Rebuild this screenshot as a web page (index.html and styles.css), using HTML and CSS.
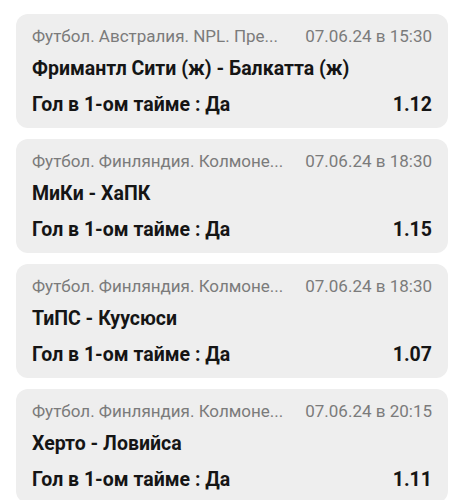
FILE: index.html
```html
<!DOCTYPE html>
<html lang="ru">
<head>
    <meta charset="utf-8" />
    <title>Ставки</title>
    <link rel="stylesheet" href="styles.css">
</head>
<body>
    <ul class="bets">
        <li class="bet">
            <div class="bet-head">
                <span class="bet-league">Футбол. Австралия. NPL. Пре...</span>
                <span class="bet-date">07.06.24 в 15:30</span>
            </div>
            <div class="bet-match">Фримантл Сити (ж) - Балкатта (ж)</div>
            <div class="bet-row">
                <span class="bet-outcome">Гол в 1-ом тайме : Да</span>
                <span class="bet-odds">1.12</span>
            </div>
        </li>
        <li class="bet">
            <div class="bet-head">
                <span class="bet-league">Футбол. Финляндия. Колмоне...</span>
                <span class="bet-date">07.06.24 в 18:30</span>
            </div>
            <div class="bet-match">МиКи - ХаПК</div>
            <div class="bet-row">
                <span class="bet-outcome">Гол в 1-ом тайме : Да</span>
                <span class="bet-odds">1.15</span>
            </div>
        </li>
        <li class="bet">
            <div class="bet-head">
                <span class="bet-league">Футбол. Финляндия. Колмоне...</span>
                <span class="bet-date">07.06.24 в 18:30</span>
            </div>
            <div class="bet-match">ТиПС - Куусюси</div>
            <div class="bet-row">
                <span class="bet-outcome">Гол в 1-ом тайме : Да</span>
                <span class="bet-odds">1.07</span>
            </div>
        </li>
        <li class="bet">
            <div class="bet-head">
                <span class="bet-league">Футбол. Финляндия. Колмоне...</span>
                <span class="bet-date">07.06.24 в 20:15</span>
            </div>
            <div class="bet-match">Херто - Ловийса</div>
            <div class="bet-row">
                <span class="bet-outcome">Гол в 1-ом тайме : Да</span>
                <span class="bet-odds">1.11</span>
            </div>
        </li>
    </ul>
</body>
</html>
```

FILE: styles.css
```css
* {margin: 0;padding: 0;list-style-type: none;box-sizing: border-box;}
body {background: #fff;font-family: Roboto, "Noto Sans", Arial, sans-serif;color: #151515;}
/*список ставок*/
.bets {display: flex;flex-direction: column;gap: 11px;padding: 14px 16px;}
.bet {background: #eeeeee;border-radius: 12px;padding: 11px 16px;}
.bet-head {display: flex;justify-content: space-between;gap: 16px;font-size: 17px;line-height: 22px;color: #7b7b7b;white-space: nowrap;}
.bet-match {margin-top: 10px;font-size: 19.5px;line-height: 24px;font-weight: bold;}
.bet-row {display: flex;justify-content: space-between;margin-top: 12px;font-size: 19.5px;line-height: 24px;font-weight: bold;}
```
